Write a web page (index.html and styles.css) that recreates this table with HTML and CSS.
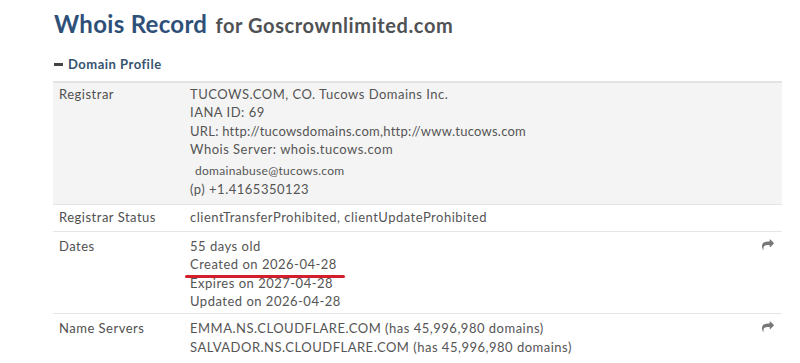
FILE: index.html
```html
<!DOCTYPE html>
<html lang="en">
<head>
    <meta charset="UTF-8">
    <title>Whois Record for Goscrownlimited.com</title>
    <link rel="stylesheet" href="styles.css">
</head>
<body>
    <div class="page">
        <!-- Title -->
        <h1 class="title">Whois Record <small>for Goscrownlimited.com</small></h1>

        <!-- Section toggle -->
        <div class="section-toggle"><span class="minus"></span>Domain Profile</div>

        <table class="profile">
            <tr class="shaded">
                <td class="label">Registrar</td>
                <td class="value">
                    <div>TUCOWS.COM, CO. Tucows Domains Inc.</div>
                    <div>IANA ID: 69</div>
                    <div class="url">URL: http://tucowsdomains.com,http://www.tucows.com</div>
                    <div>Whois Server: whois.tucows.com</div>
                    <div class="contact">
                        <div class="email">domainabuse@tucows.com</div>
                        <div class="phone"><span class="tag">(p)</span> +1.4165350123</div>
                    </div>
                </td>
                <td class="action"></td>
            </tr>
            <tr>
                <td class="label">Registrar Status</td>
                <td class="value">clientTransferProhibited, clientUpdateProhibited</td>
                <td class="action"></td>
            </tr>
            <tr class="lower">
                <td class="label">Dates</td>
                <td class="value">
                    <div>55 days old</div>
                    <div><span class="marked">Created on 2026-04-28</span></div>
                    <div>Expires on 2027-04-28</div>
                    <div>Updated on 2026-04-28</div>
                </td>
                <td class="action">
                    <svg class="share" viewBox="0 0 1792 1792"><path d="M1792 640q0 26-19 45l-512 512q-19 19-45 19t-45-19-19-45v-256h-224q-98 0-175.5 6t-154 21.5-133 42.5-105.5 69.5-80 101-48.5 138.5-17.5 181q0 55 5 123 0 6 2.5 23.5t2.5 26.5q0 15-8.5 25t-23.5 10q-16 0-28-17-7-9-13-22t-13.5-30-10.5-24q-127-285-127-451 0-199 53-333 162-403 875-403h224v-256q0-26 19-45t45-19 45 19l512 512q19 19 19 45z"/></svg>
                </td>
            </tr>
            <tr class="lower">
                <td class="label">Name Servers</td>
                <td class="value">
                    <div>EMMA.NS.CLOUDFLARE.COM (has 45,996,980 domains)</div>
                    <div>SALVADOR.NS.CLOUDFLARE.COM (has 45,996,980 domains)</div>
                </td>
                <td class="action">
                    <svg class="share" viewBox="0 0 1792 1792"><path d="M1792 640q0 26-19 45l-512 512q-19 19-45 19t-45-19-19-45v-256h-224q-98 0-175.5 6t-154 21.5-133 42.5-105.5 69.5-80 101-48.5 138.5-17.5 181q0 55 5 123 0 6 2.5 23.5t2.5 26.5q0 15-8.5 25t-23.5 10q-16 0-28-17-7-9-13-22t-13.5-30-10.5-24q-127-285-127-451 0-199 53-333 162-403 875-403h224v-256q0-26 19-45t45-19 45 19l512 512q19 19 19 45z"/></svg>
                </td>
            </tr>
        </table>
    </div>
</body>
</html>
```

FILE: styles.css
```css
/* Page */
body {
    margin: 0;
    background: #fff;
    font-family: Lato, "Open Sans", sans-serif;
    color: #555;
    overflow: hidden;
}

.page {
    padding: 9px 0 0 53px;
    width: 729px;
}

/* Title */
.title {
    margin: 0;
    font-size: 24px;
    font-weight: 700;
    line-height: 30px;
    color: #2e5078;
    padding-left: 1px;
    letter-spacing: 0.3px;
}

.title small {
    font-size: 20px;
    color: #4f5254;
    margin-left: 2px;
    letter-spacing: 0.6px;
}

/* Section toggle */
.section-toggle {
    display: flex;
    align-items: center;
    margin-top: 14px;
    font-size: 13px;
    font-weight: 700;
    letter-spacing: 0.5px;
    color: #35536f;
    height: 20px;
    padding-left: 1px;
}

.minus {
    width: 9px;
    height: 3px;
    background: #444;
    margin-right: 5px;
}

/* Profile table */
.profile {
    width: 100%;
    margin-top: 7px;
    border-collapse: collapse;
    border-top: 2px solid #e4e4e4;
    font-size: 13px;
    letter-spacing: 0.5px;
    line-height: 18.3px;
}

.profile tr {
    border-bottom: 1px solid #e6e6e6;
}

.profile tr:last-child {
    border-bottom: none;
}

.profile tr.shaded {
    background: #f4f4f4;
}

.profile td {
    vertical-align: top;
    padding: 3px 6px 5px;
}

.profile tr.shaded td {
    padding-top: 2px;
}

.profile tr.lower td {
    padding-top: 5px;
    padding-bottom: 3px;
}

.profile .label {
    width: 125px;
    color: #505050;
}

.profile .value {
    padding-left: 0;
}

.profile .action {
    width: 20px;
    text-align: right;
    padding-right: 8px;
}

.url {
    letter-spacing: 0.25px;
}

.contact {
    margin-top: 4px;
}

.email {
    font-size: 12px;
    padding-left: 5px;
    letter-spacing: 0.3px;
}

.tag {
    font-size: 13px;
}

/* Red annotation under created date */
.marked {
    position: relative;
}

.marked::after {
    content: "";
    position: absolute;
    left: -5px;
    right: -8px;
    bottom: -6px;
    height: 3px;
    border-radius: 2px;
    background: #d21f2b;
}

.share {
    width: 12px;
    height: 12px;
    fill: #777;
    margin-top: 2px;
}
```
